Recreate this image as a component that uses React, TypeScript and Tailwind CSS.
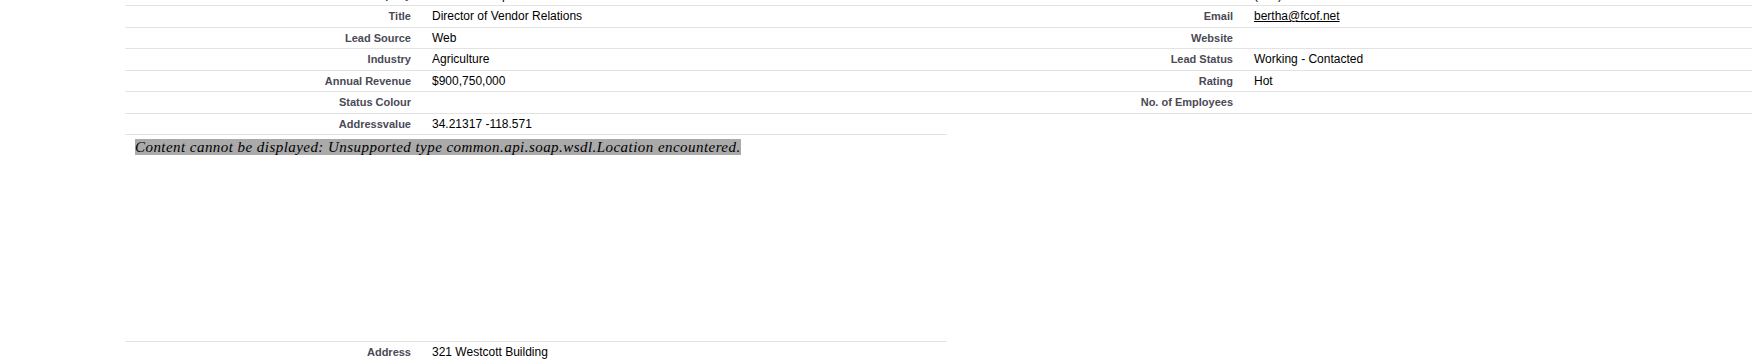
const rows = [
  { l1: 'Company', v1: 'Farmers Coop. of Florida', l2: 'Phone', v2: '(850) 644-4200' },
  { l1: 'Title', v1: 'Director of Vendor Relations', l2: 'Email', v2: 'bertha@fcof.net', link: true },
  { l1: 'Lead Source', v1: 'Web', l2: 'Website', v2: '' },
  { l1: 'Industry', v1: 'Agriculture', l2: 'Lead Status', v2: 'Working - Contacted' },
  { l1: 'Annual Revenue', v1: '$900,750,000', l2: 'Rating', v2: 'Hot' },
  { l1: 'Status Colour', v1: '', l2: 'No. of Employees', v2: '' },
];

function Label({ text }: { text: string }) {
  return (
    <div className="w-[296px] shrink-0 pr-[10px] pt-[3px] text-right text-[11px] leading-[14px] font-bold text-[#4a4a56]">
      {text}
    </div>
  );
}

function Value({ text, link }: { text: string; link?: boolean }) {
  return (
    <div className="w-[526px] shrink-0 pl-[11px] pt-[3px] text-[12px] leading-[14px] text-black whitespace-nowrap">
      {link ? <a className="underline text-black">{text}</a> : text}
    </div>
  );
}

export default function App() {
  return (
    <div className="w-[1752px] h-[361px] overflow-hidden bg-white font-['Liberation_Sans',Arial,sans-serif]">
      <div className="pl-[125px] mt-[-15.5px] w-[1769px]">
        {rows.map((r) => (
          <div key={r.l1} className="flex h-[21.5px] border-b border-[#e3e3e3]">
            <Label text={r.l1} />
            <Value text={r.v1} />
            <Label text={r.l2} />
            <Value text={r.v2} link={r.link} />
          </div>
        ))}

        {/* left column only from here */}
        <div className="w-[822px]">
          <div className="flex h-[21.5px] border-b border-[#e3e3e3]">
            <Label text="Addressvalue" />
            <Value text="34.21317 -118.571" />
          </div>
          <div className="h-[207px] pl-[10px] pt-[4px] border-b border-[#e3e3e3] text-[15px] leading-[17px] italic tracking-[0.45px] text-black font-['Liberation_Serif','Times_New_Roman',serif]">
            <span className="bg-[#aaaaaa]">
              Content cannot be displayed: Unsupported type common.api.soap.wsdl.Location encountered.
            </span>
          </div>
          <div className="flex h-[21.5px] border-b border-[#e3e3e3]">
            <Label text="Address" />
            <Value text="321 Westcott Building" />
          </div>
        </div>
      </div>
    </div>
  );
}
